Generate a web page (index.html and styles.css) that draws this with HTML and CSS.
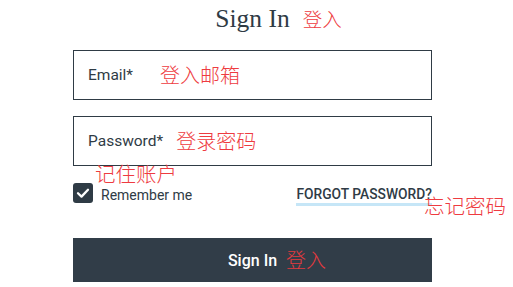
FILE: index.html
```html
<!DOCTYPE html>
<html lang="en">
<head>
<meta charset="utf-8">
<title>Sign In</title>
<link rel="stylesheet" href="styles.css">
</head>
<body>
<form class="form">
  <h1 class="title"><span class="title-text">Sign In<span class="note note-title">登入</span></span></h1>
  <label class="field">
    <span class="field-label">Email*</span>
    <span class="note-inline note-email">登入邮箱</span>
  </label>
  <label class="field field-second">
    <span class="field-label">Password*</span>
    <span class="note-inline note-pass">登录密码</span>
  </label>
  <div class="options">
    <label class="remember">
      <span class="note note-remember">记住账户</span>
      <span class="checkbox">
        <svg width="20" height="20" viewBox="0 0 20 20"><polyline points="5,10.2 8.5,13.6 15,6.8" fill="none" stroke="#fff" stroke-width="2.3" stroke-linecap="round" stroke-linejoin="round"/></svg>
      </span>
      <span class="remember-text">Remember me</span>
    </label>
    <a class="forgot">FORGOT PASSWORD?<span class="note note-forgot">忘记密码</span></a>
  </div>
  <button type="button" class="submit"><span class="submit-text">Sign In<span class="note note-submit">登入</span></span></button>
</form>
</body>
</html>
```
FILE: styles.css
```css
html, body {
  margin: 0;
  padding: 0;
  background: #ffffff;
}

.form {
  width: 359px;
  margin-left: 73px;
  padding-top: 5px;
  font-family: Roboto, "Noto Sans", sans-serif;
  color: #2f3b45;
}

.title {
  margin: 0 0 17px 0;
  height: 28px;
  text-align: center;
  font-family: "Liberation Serif", "DejaVu Serif", serif;
  font-weight: 400;
  font-size: 25.5px;
  line-height: 28px;
  color: #2f3b45;
}

.title-text {
  position: relative;
}

.note {
  position: absolute;
  white-space: nowrap;
  font-family: "Noto Sans CJK SC", sans-serif;
  font-weight: 300;
  font-size: 20px;
  line-height: 20px;
  color: #ee3b40;
  letter-spacing: 0;
}

.note-title {
  left: calc(100% + 13px);
  top: 5px;
  font-size: 19.5px;
}

.field {
  box-sizing: border-box;
  display: flex;
  align-items: center;
  height: 50px;
  padding-left: 14px;
  border: 1px solid #2f3b45;
}

.field-second {
  margin-top: 16px;
}

.field-label {
  font-size: 15.5px;
  color: #2f3b45;
}

.note-inline {
  font-family: "Noto Sans CJK SC", sans-serif;
  font-weight: 300;
  font-size: 20px;
  line-height: 24px;
  color: #ee3b40;
}

.note-email {
  margin-left: 27px;
}

.note-pass {
  margin-left: 13px;
}

.options {
  display: flex;
  justify-content: space-between;
  align-items: flex-start;
  margin-top: 17px;
  height: 20px;
}

.remember {
  position: relative;
  display: flex;
  align-items: center;
}

.note-remember {
  left: 22px;
  top: -20px;
  font-size: 20.5px;
}

.checkbox {
  display: block;
  width: 20px;
  height: 20px;
  border-radius: 3px;
  background: #2f3b45;
}

.checkbox svg {
  display: block;
}

.remember-text {
  margin-left: 8px;
  margin-top: 4px;
  font-size: 14px;
  line-height: 14px;
  color: #2f3b45;
}

.forgot {
  position: relative;
  margin-top: 3px;
  padding-bottom: 1px;
  font-size: 13.8px;
  font-weight: 500;
  line-height: 16px;
  color: #2f3b45;
  border-bottom: 3px solid #c6e6f7;
}

.note-forgot {
  right: -74px;
  top: 9px;
  font-size: 20.5px;
}

.submit {
  display: flex;
  justify-content: center;
  align-items: center;
  width: 100%;
  height: 44px;
  margin-top: 35px;
  padding: 0;
  border: 0;
  background: #313d48;
  font-family: Roboto, "Noto Sans", sans-serif;
  font-size: 16px;
  font-weight: 500;
  color: #ffffff;
}

.submit-text {
  position: relative;
}

.note-submit {
  left: calc(100% + 9px);
  top: -1px;
  color: #e53a3f;
}
```
